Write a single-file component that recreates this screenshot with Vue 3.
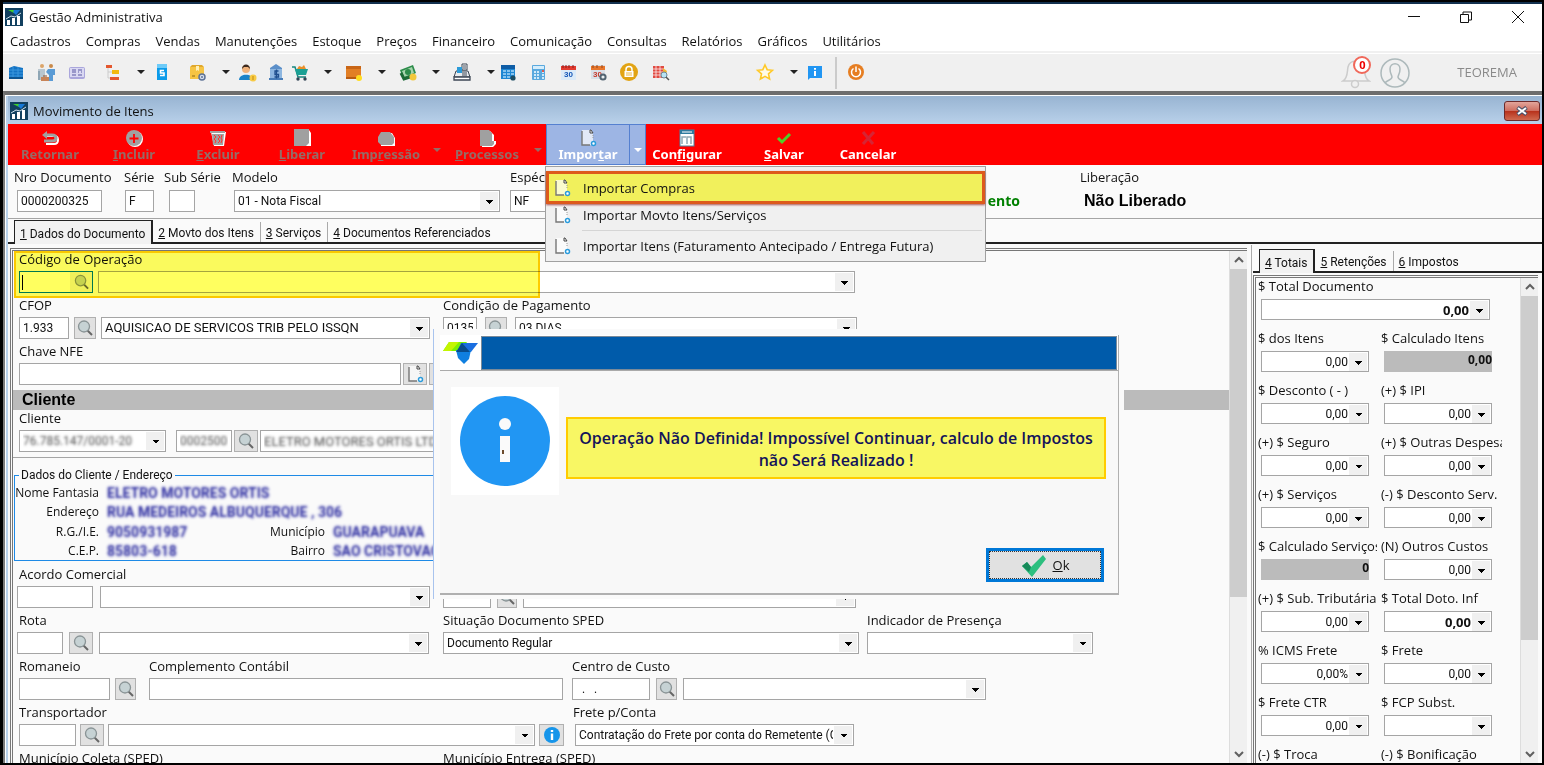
<script setup>
const menus = ['Cadastros', 'Compras', 'Vendas', 'Manutenções', 'Estoque', 'Preços', 'Financeiro', 'Comunicação', 'Consultas', 'Relatórios', 'Gráficos', 'Utilitários']

const tools = [
  { icon: 'building', gap: 3 }, { icon: 'people', gap: 11 }, { icon: 'card', gap: 10 },
  { icon: 'tree', gap: 16 }, { icon: 'caret', gap: 13 }, { icon: 'book', gap: 6 },
  { icon: 'box', gap: 15 }, { icon: 'caret', gap: 14 }, { icon: 'seller', gap: 7 },
  { icon: 'bank', gap: 8 }, { icon: 'cart', gap: 4 }, { icon: 'caret', gap: 13 },
  { icon: 'package', gap: 11 }, { icon: 'caret', gap: 13 }, { icon: 'money', gap: 11 },
  { icon: 'caret', gap: 13 }, { icon: 'register', gap: 11 }, { icon: 'caret', gap: 14 },
  { icon: 'schedule', gap: 2 }, { icon: 'calc', gap: 10 }, { icon: 'cal', gap: 10 },
  { icon: 'calgear', gap: 11 }, { icon: 'lock', gap: 10 }, { icon: 'report', gap: 11 },
  { icon: 'star', gap: 85 }, { icon: 'caret', gap: 14 }, { icon: 'info', gap: 6 },
  { icon: 'sep', gap: 10 }, { icon: 'power', gap: 9 },
]

const actions = [
  { a: '', k: 'R', b: 'etornar', plain: true, icon: 'a-back', off: true },
  { a: '', k: 'I', b: 'ncluir', icon: 'a-plus', off: true },
  { a: '', k: 'E', b: 'xcluir', icon: 'a-trash', off: true },
  { a: '', k: 'L', b: 'iberar', icon: 'a-page', off: true },
  { a: 'Imp', k: 'r', b: 'essão', icon: 'a-print', off: true, drop: true },
  { a: '', k: 'P', b: 'rocessos', icon: 'a-doc', off: true, drop: true },
  { a: 'Impor', k: 't', b: 'ar', icon: 'import', drop: true, on: true },
  { a: 'Con', k: 'f', b: 'igurar', icon: 'a-config', narrow: true },
  { a: '', k: 'S', b: 'alvar', icon: 'a-check' },
  { a: 'Cancelar', k: '', b: '', icon: 'a-x' },
]

const tabs = [['1', 'Dados do Documento'], ['2', 'Movto dos Itens'], ['3', 'Serviços'], ['4', 'Documentos Referenciados']]
const sideTabs = [['4', 'Totais'], ['5', 'Retenções'], ['6', 'Impostos']]

const totals = [
  { label: '$ Total Documento', v: '0,00', wide: true, bold: true },
  { label: '$ dos Itens', v: '0,00' }, { label: '$ Calculado Itens', v: '0,00', calc: true },
  { label: '$ Desconto ( - )', v: '0,00' }, { label: '(+) $ IPI', v: '0,00' },
  { label: '(+) $ Seguro', v: '0,00' }, { label: '(+) $ Outras Despesas', v: '0,00' },
  { label: '(+) $ Serviços', v: '0,00' }, { label: '(-) $ Desconto Serv.', v: '0,00' },
  { label: '$ Calculado Serviços', v: '0', calc: true }, { label: '(N) Outros Custos', v: '0,00' },
  { label: '(+) $ Sub. Tributária', v: '0,00' }, { label: '$ Total Doto. Inf', v: '0,00', bold: true },
  { label: '% ICMS Frete', v: '0,00%' }, { label: '$ Frete', v: '0,00' },
  { label: '$ Frete CTR', v: '0,00' }, { label: '$ FCP Subst.', v: '' },
  { label: '(-) $ Troca', v: '0,00' }, { label: '(-) $ Bonificação', v: '0,00' },
]
</script>

<template>
  <svg class="sprite" aria-hidden="true">
    <symbol id="brand" viewBox="0 0 18 18"><rect width="18" height="18" fill="#12405f" /><path d="M3 2h6l3 2-3 1z" fill="#3fd02c" /><path d="M9 2h6l-4 5-3-3z" fill="#1478d8" /><path d="M2 12h3v5H2zM7 10h3v7H7zM12 8h3v9h-3z" fill="#fff" /><path d="M1 11l5-3 4 1 6-4" stroke="#cfe2ee" fill="none" /></symbol>
    <symbol id="building" viewBox="0 0 20 20"><path d="M3 5l5-2 9 2v10H3z" fill="#1373c4" /><path d="M3 7h14M3 10h14M3 13h14M7 4v11M12 4v11" stroke="#3a97dd" stroke-width="1" /><path d="M3 14h14v2H3z" fill="#0e5490" /></symbol>
    <symbol id="people" viewBox="0 0 20 20"><circle cx="5" cy="3" r="2" fill="#dca56a" /><circle cx="14" cy="3" r="2" fill="#c98a4a" /><path d="M1 6h7v11H1z" fill="#b9c6cf" /><path d="M1 8v9h2V8z" fill="#8fa6b5" /><path d="M11 6h7v6h-2v6h-4v-6l-3-3z" fill="#5a9bd5" /><path d="M4 14h8v4H4z" fill="#c88458" /><path d="M6 13h4" stroke="#8a5030" /></symbol>
    <symbol id="card" viewBox="0 0 20 20"><rect x="2" y="4" width="16" height="12" rx="2" fill="#aaa6dc" /><rect x="3" y="5" width="14" height="9" fill="#d9d8f2" /><path d="M5 7h4M5 9h4M5 12h4M11 7h4M11 9h1m2 0h1M11 12h4" stroke="#8481bd" stroke-width="1.4" /></symbol>
    <symbol id="tree" viewBox="0 0 20 20"><path d="M5 5v10h5M5 9h5" stroke="#ccc" fill="none" /><rect x="3" y="2" width="6" height="3" fill="#e4572e" /><rect x="9" y="7" width="7" height="4" fill="#f2b90f" /><rect x="7" y="14" width="9" height="3" fill="#e4572e" /></symbol>
    <symbol id="book" viewBox="0 0 20 20"><rect x="5" y="1" width="10" height="16" fill="#0c9bea" /><rect x="5" y="1" width="10" height="4" fill="#6ecbf8" /><path d="M12 7.500H8.500V10H12v2.500H8" stroke="#fff" stroke-width="1.600" fill="none" /></symbol>
    <symbol id="box" viewBox="0 0 20 20"><path d="M3 4h14v12H3z" fill="#f6c443" /><path d="M3 4l2-2h10l2 2z" fill="#e0a82c" /><path d="M9 3h3v5l-1.500-1L9 8z" fill="#fff0b8" /><path d="M5 13h3" stroke="#8c6a16" /><circle cx="15" cy="14" r="3" fill="#d6deea" stroke="#5e7397" stroke-width="1.500" /><circle cx="15" cy="14" r="1" fill="#5e7397" /></symbol>
    <symbol id="seller" viewBox="0 0 20 20"><circle cx="8" cy="6" r="4" fill="#f0b27a" /><path d="M4 6c0-6 8-6 8 0l-2-2H6z" fill="#3c2a20" /><path d="M1 17c0-7 14-7 14 0z" fill="#1b83c9" /><circle cx="15" cy="15" r="3.500" fill="#f7ca45" /><path d="M15 13v4" stroke="#c28a10" /></symbol>
    <symbol id="bank" viewBox="0 0 20 20"><path d="M4 5l6-4 6 4v2H4z" fill="#5b8fc9" /><rect x="4" y="6" width="12" height="10" fill="#8db6e0" /><path d="M3 15h14v2H3z" fill="#477cb8" /><path d="M12.500 8H9v3.500h3.500V14H8.500M10.500 6.500v9" stroke="#1f4f8e" stroke-width="1.300" fill="none" /></symbol>
    <symbol id="cart" viewBox="0 0 20 20"><path d="M2 4h3l3 10h8" stroke="#17877f" stroke-width="1.500" fill="none" /><path d="M5 6h13l-2 6H7z" fill="#1aa094" /><path d="M7 6l2-3 3 1 2-2 2 4z" fill="#e98f29" /><circle cx="8" cy="16" r="1.700" fill="#345" /><circle cx="15" cy="16" r="1.700" fill="#345" /></symbol>
    <symbol id="package" viewBox="0 0 20 20"><path d="M2 3h15v13H2z" fill="#e27f25" /><path d="M2 3h15v3H2z" fill="#c96616" /><path d="M2 14h13v2H2z" fill="#b85c12" /><circle cx="15" cy="15" r="3" fill="#ffdd1f" /></symbol>
    <symbol id="money" viewBox="0 0 20 20"><path d="M2 7l13-5 3 8-13 6z" fill="#2c8c4a" /><path d="M4 8l10-4 2 6-10 4z" fill="#a5d3ac" /><circle cx="10" cy="9" r="3" fill="#2c8c4a" /><path d="M3 10l3 6 6-2" stroke="#1c6a36" stroke-width="3" fill="none" /><circle cx="15" cy="14" r="3.500" fill="#f2c83b" /></symbol>
    <symbol id="register" viewBox="0 0 20 20"><path d="M10 1h5v6h-5z" fill="#fff" stroke="#3d4654" /><path d="M4 8h12l2 6H2z" fill="#e8ebee" stroke="#3d4654" /><path d="M2 14h16v3H2z" fill="#fff" stroke="#3d4654" stroke-width="1.300" /><path d="M10 10h5M10 12h5M11 3h3M11 5h3" stroke="#3d4654" /><path d="M5 4h5v6H5z" fill="#2c9bd8" /></symbol>
    <symbol id="schedule" viewBox="0 0 20 20"><rect x="3" y="2" width="14" height="14" fill="#1f87d3" /><rect x="3" y="2" width="14" height="4" fill="#0f5da6" /><path d="M5 8h3m1 0h3m1 0h3M5 11h3m1 0h3m1 0h3M5 14h3m1 0h3" stroke="#a9d8f8" stroke-width="1.700" /><circle cx="15" cy="15" r="2.600" fill="#1c4d63" /></symbol>
    <symbol id="calc" viewBox="0 0 20 20"><rect x="4" y="2" width="13" height="15" rx="1" fill="#5aa9de" /><rect x="5" y="3" width="11" height="3" fill="#d5edfb" /><path d="M6 9h2m1 0h2m3 0h2M6 12h2m1 0h2m3 0h2M6 15h2m1 0h2m3 0h2" stroke="#cfe9f9" stroke-width="1.800" /><path d="M14 8h2" stroke="#e2574c" stroke-width="2" /></symbol>
    <symbol id="cal" viewBox="0 0 20 20"><rect x="3" y="2" width="15" height="15" fill="#dcebf8" /><rect x="3" y="3" width="15" height="4" fill="#e23b31" /><path d="M5 2v3m3-3v3m3-3v3m4-3v3" stroke="#8c1f18" /><text x="6" y="14" font-family="Liberation Sans" font-size="8" font-weight="bold" fill="#1557b8">30</text></symbol>
    <symbol id="calgear" viewBox="0 0 20 20"><rect x="2" y="2" width="14" height="14" fill="#d9e0e8" /><rect x="2" y="3" width="14" height="4" fill="#e8772c" /><path d="M4 2v3m4-3v3m5-3v3" stroke="#95491a" /><text x="4" y="14" font-family="Liberation Sans" font-size="8" font-weight="bold" fill="#c63a2c">30</text><circle cx="14" cy="14" r="2.600" fill="#e8edf0" stroke="#526370" stroke-width="2" /></symbol>
    <symbol id="lock" viewBox="0 0 20 20"><circle cx="10" cy="9" r="9" fill="#e2a414" /><path d="M7 8V6.500c0-4 6-4 6 0V8" stroke="#fff" stroke-width="1.500" fill="none" /><rect x="5.500" y="8" width="9" height="6" fill="#fff" /><path d="M7 10h6M7 12h6" stroke="#e2a414" stroke-width=".8" /></symbol>
    <symbol id="report" viewBox="0 0 20 20"><rect x="3" y="3" width="11" height="12" fill="#e04a42" /><path d="M3 6h11M3 9h11M3 12h11M6 3v12M10 3v12" stroke="#fff" stroke-width=".7" /><path d="M13 5l4 3-1 3-3-2z" fill="#f2b632" /><circle cx="14" cy="12" r="3" fill="#b7e2f5" stroke="#6d8794" /><path d="M16 14l3 3" stroke="#555" stroke-width="1.500" /></symbol>
    <symbol id="star" viewBox="0 0 20 20"><path d="M10 2l2.200 4.700 5.200.6-3.900 3.500 1.100 5.200L10 13.400 5.400 16l1.100-5.200-3.900-3.500 5.200-.6z" fill="#fffbe8" stroke="#ffc928" stroke-width="1.600" /></symbol>
    <symbol id="info" viewBox="0 0 20 20"><path d="M3 3h14v12H5l-2 2z" fill="#2196f3" /><path d="M10 5v1.800M10 8v5" stroke="#fff" stroke-width="2" /></symbol>
    <symbol id="power" viewBox="0 0 20 20"><circle cx="10" cy="9" r="8" fill="#e67e22" /><path d="M7.500 5.500a4.500 4.500 0 1 0 5 0M10 3.500V9" stroke="#fff" stroke-width="1.500" fill="none" /></symbol>
    <symbol id="sep" viewBox="0 0 2 32"><path d="M1 0v32" stroke="#a6a6a6" stroke-width="1" /></symbol>
    <symbol id="caret" viewBox="0 0 10 20"><path d="M1 7h8l-4 4z" fill="#222" /></symbol>
    <symbol id="caretw" viewBox="0 0 10 20"><path d="M1 8h8l-4 4z" fill="currentColor" /></symbol>
    <symbol id="import" viewBox="0 0 18 18"><path d="M3 1h8l3 4v11H3z" fill="#fff" opacity=".7" /><path d="M3 2v14h8" stroke="#777" stroke-width="1.400" fill="none" /><path d="M11 1h1l2 3h-3z" fill="#fff" stroke="#444" stroke-width="1" /><path d="M14 6v4" stroke="#999" stroke-dasharray="1 1" /><circle cx="14.500" cy="14.500" r="2" fill="#fff" stroke="#2a9bdc" stroke-width="1.500" /></symbol>
    <symbol id="a-back" viewBox="0 0 18 18"><path d="M6 7h7q4 0 4 4t-4 4H5" stroke="#fff" stroke-width="2" fill="none" /><path d="M5 6h6q4 0 4 3t-4 3H3" stroke="#a0a0a0" stroke-width="3" fill="none" /><path d="M1 6l5-4v8z" fill="#a0a0a0" /></symbol>
    <symbol id="a-plus" viewBox="0 0 18 18"><circle cx="10" cy="10" r="8" fill="#fff" /><circle cx="9" cy="9" r="8" fill="#a0a0a0" /><path d="M9 5v9M4.500 9.500h9" stroke="#f00" stroke-width="1.800" /></symbol>
    <symbol id="a-trash" viewBox="0 0 18 18"><path d="M2 3h15l-2 14H5z" fill="#fff" /><path d="M1 2h15v2H1zM3 5h12l-1 11H4z" fill="#a0a0a0" /><path d="M5 6l2 2-2 2 2 2-1 2M9 6l2 2-2 2 2 2-2 2M13 6l-1 3 1 2-1 3" stroke="#f33" stroke-width="1" fill="none" /></symbol>
    <symbol id="a-page" viewBox="0 0 18 18"><path d="M2 1h14l2 3v13H6z" fill="#fff" /><path d="M1 0h15v14l-3 3H1z" fill="#a0a0a0" /></symbol>
    <symbol id="a-print" viewBox="0 0 18 18"><path d="M4 4h11l3 5v8H4z" fill="#fff" /><path d="M4 3h9l4 5v6l-2 2H4l-3-3V8z" fill="#a0a0a0" /></symbol>
    <symbol id="a-doc" viewBox="0 0 18 18"><path d="M4 2h8l4 4v6h2v3l-3 3H4z" fill="#fff" /><path d="M2 1h9l3 3v8h2v3l-2 2H2z" fill="#a0a0a0" /></symbol>
    <symbol id="a-config" viewBox="0 0 18 18"><rect x="2" y="1" width="14" height="16" fill="#fff" stroke="#4b86a3" /><path d="M2 1h14v4H2z" fill="#2f7b9f" /><path d="M4 3h10" stroke="#fff" /><path d="M4 15V8h4M9 15V8h4v7" fill="none" stroke="#8fa8b4" stroke-width="1.500" /></symbol>
    <symbol id="a-check" viewBox="0 0 18 18"><path d="M3 9l4 4 8-8" stroke="#4fcf28" stroke-width="3" fill="none" /></symbol>
    <symbol id="a-x" viewBox="0 0 18 18"><path d="M4 3l10 12M15 3L4 15" stroke="#d62434" stroke-width="3" fill="none" /></symbol>
    <symbol id="search" viewBox="0 0 18 18"><path d="M11 11l5 5" stroke="#666" stroke-width="2" /><circle cx="8" cy="7.500" r="5.500" fill="#c6d2d4" stroke="#8a9496" stroke-width="1.300" /></symbol>
    <symbol id="infodot" viewBox="0 0 18 18"><circle cx="9" cy="9" r="8" fill="#1695ea" /><path d="M9 4v2M9 7.500V14" stroke="#fff" stroke-width="2.400" /></symbol>
    <symbol id="up" viewBox="0 0 10 10"><path d="M1 7l4-4 4 4" stroke="#606060" stroke-width="2" fill="none" /></symbol>
    <symbol id="down" viewBox="0 0 10 10"><path d="M1 3l4 4 4-4" stroke="#606060" stroke-width="2" fill="none" /></symbol>
  </svg>

  <div class="screen">
    <header class="titlebar">
      <svg class="i18"><use href="#brand" /></svg>
      <span class="grow">Gestão Administrativa</span>
      <button class="win" aria-label="Minimizar"><svg viewBox="0 0 12 12"><path d="M0 5.500h12" stroke="#111" /></svg></button>
      <button class="win" aria-label="Restaurar"><svg viewBox="0 0 12 12"><path d="M.5 3.500h8v8h-8zM3 3V1h8.500v8H9" stroke="#111" fill="none" /></svg></button>
      <button class="win" aria-label="Fechar"><svg viewBox="0 0 12 12"><path d="M0 0l12 12M12 0L0 12" stroke="#111" /></svg></button>
    </header>
    <nav class="menubar"><a v-for="m in menus" :key="m" href="#">{{ m }}</a></nav>

    <div class="tools">
      <button v-for="(t, n) in tools" :key="n" :class="['tool', t.icon]" :style="{ marginLeft: t.gap + 'px' }" :aria-label="t.icon">
        <svg><use :href="'#' + t.icon" /></svg>
      </button>
      <span class="grow"></span>
      <span class="bell">
        <svg viewBox="0 0 30 34"><path d="M2 25c5-3 4-9 5-14 1-4 4-6 8-6s7 2 8 6c1 5 0 11 5 14z" fill="#f2f2f2" stroke="#ccc" stroke-width="1.500" /><circle cx="14" cy="28" r="3.500" fill="#f0f0f0" stroke="#ccc" stroke-width="1.500" /></svg>
        <b>0</b>
      </span>
      <svg class="user" viewBox="0 0 30 30"><circle cx="15" cy="15" r="14" fill="none" stroke="#adb9bb" stroke-width="1.500" /><path d="M5 25c2-3 7-3 7-6 0-2-2-3-2-8 0-7 10-7 10 0 0 5-2 6-2 8 0 3 5 3 7 6" fill="none" stroke="#adb9bb" stroke-width="1.500" /></svg>
      <span class="company">TEOREMA</span>
    </div>

    <main class="child">
      <div class="childtitle">
        <svg class="i18"><use href="#brand" /></svg>
        <span class="grow">Movimento de Itens</span>
        <button class="close" aria-label="Fechar janela"><svg viewBox="0 0 12 10"><path d="M1.500 1.500l9 7M10.500 1.500l-9 7" stroke="#4a5068" stroke-width="4" /><path d="M2 2l8 6M10 2L2 8" stroke="#fff" stroke-width="2" /></svg></button>
      </div>

      <div class="actions">
        <template v-for="a in actions" :key="a.icon">
          <button :class="['act', { off: a.off, on: a.on, narrow: a.narrow }]">
            <svg class="i18"><use :href="'#' + a.icon" /></svg>
            <span>{{ a.a }}<u :class="{ plain: a.plain }">{{ a.k }}</u>{{ a.b }}</span>
          </button>
          <button v-if="a.drop" :class="['drop', { off: a.off, on: a.on }]" aria-label="Mais opções"><svg><use href="#caretw" /></svg></button>
        </template>
        <div class="popup">
          <button class="item hot"><svg class="i18"><use href="#import" /></svg>Importar Compras</button>
          <button class="item"><svg class="i18"><use href="#import" /></svg>Importar Movto Itens/Serviços</button>
          <hr>
          <button class="item"><svg class="i18"><use href="#import" /></svg>Importar Itens (Faturamento Antecipado / Entrega Futura)</button>
        </div>
      </div>

      <section class="head">
        <div class="hf nro"><label for="nro">Nro Documento</label><input id="nro" value="0000200325"></div>
        <div class="hf serie"><label for="serie">Série</label><input id="serie" value="F"></div>
        <div class="hf sub"><label for="sub">Sub Série</label><input id="sub"></div>
        <div class="hf modelo"><label for="modelo">Modelo</label><select id="modelo"><option>01 - Nota Fiscal</option></select></div>
        <div class="hf especie"><label for="esp">Espécie</label><input id="esp" value="NF"></div>
        <div class="status">ento</div>
        <div class="hf lib"><span>Liberação</span><strong>Não Liberado</strong></div>
      </section>

      <div class="tabs">
        <button v-for="(t, n) in tabs" :key="n" :class="{ active: n === 0 }"><u>{{ t[0] }}</u> {{ t[1] }}</button>
      </div>

      <div class="work">
        <div class="pane">
          <form class="form" @submit.prevent>
            <div class="mark"></div>
            <div class="row">
              <div class="fld g-op"><label for="op">Código de Operação</label>
                <div><span class="combo"><input id="op"><button aria-label="Pesquisar operação"><svg class="i18"><use href="#search" /></svg></button></span><select aria-label="Operação"><option></option></select></div>
              </div>
            </div>
            <div class="row">
              <div class="fld g-cfop"><label for="cfop">CFOP</label>
                <div><input id="cfop" value="1.933"><button aria-label="Pesquisar CFOP"><svg class="i18"><use href="#search" /></svg></button><select class="caps" aria-label="Descrição CFOP"><option>AQUISICAO DE SERVICOS TRIB PELO ISSQN</option></select></div>
              </div>
              <div class="fld g-cond"><label for="cond">Condição de Pagamento</label>
                <div><input id="cond" value="0135"><button aria-label="Pesquisar condição"><svg class="i18"><use href="#search" /></svg></button><select aria-label="Condição"><option>03 DIAS</option></select></div>
              </div>
            </div>
            <div class="row">
              <div class="fld g-nfe"><label for="nfe">Chave NFE</label>
                <div><input id="nfe"><button aria-label="Importar chave"><svg class="i18"><use href="#import" /></svg></button><button aria-label="Consultar chave"></button></div>
              </div>
            </div>
            <h2>Cliente</h2>
            <div class="row client">
              <div class="fld g-cli"><label for="cli">Cliente</label>
                <div><select id="cli" class="masked"><option>76.785.147/0001-20</option></select><input class="masked" aria-label="Código do cliente" value="0002500"><button aria-label="Pesquisar cliente"><svg class="i18"><use href="#search" /></svg></button><input class="masked caps" aria-label="Nome do cliente" value="ELETRO MOTORES ORTIS LTDA"></div>
              </div>
            </div>
            <fieldset>
              <legend>Dados do Cliente / Endereço</legend>
              <dl>
                <dt>Nome Fantasia</dt><dd class="span">ELETRO MOTORES ORTIS</dd>
                <dt>Endereço</dt><dd class="span">RUA MEDEIROS ALBUQUERQUE , 306</dd>
                <dt>R.G./I.E.</dt><dd>9050931987</dd><dt>Município</dt><dd>GUARAPUAVA</dd>
                <dt>C.E.P.</dt><dd>85803-618</dd><dt>Bairro</dt><dd>SAO CRISTOVAO</dd>
              </dl>
            </fieldset>
            <div class="row">
              <div class="fld g-aco"><label for="aco">Acordo Comercial</label>
                <div><input id="aco"><select aria-label="Acordo"><option></option></select></div>
              </div>
              <div class="fld g-aco2"><label></label>
                <div><input aria-label="Código"><button aria-label="Pesquisar"><svg class="i18"><use href="#search" /></svg></button><select aria-label="Descrição"><option></option></select></div>
              </div>
            </div>
            <div class="row">
              <div class="fld g-rota"><label for="rota">Rota</label>
                <div><input id="rota"><button aria-label="Pesquisar rota"><svg class="i18"><use href="#search" /></svg></button><select aria-label="Nome da rota"><option></option></select></div>
              </div>
              <div class="fld g-sped"><label for="sped">Situação Documento SPED</label>
                <div><select id="sped"><option>Documento Regular</option></select></div>
              </div>
              <div class="fld g-pres"><label for="pres">Indicador de Presença</label>
                <div><select id="pres"><option></option></select></div>
              </div>
            </div>
            <div class="row">
              <div class="fld g-rom"><label for="rom">Romaneio</label>
                <div><input id="rom"><button aria-label="Pesquisar romaneio"><svg class="i18"><use href="#search" /></svg></button></div>
              </div>
              <div class="fld g-comp"><label for="comp">Complemento Contábil</label>
                <div><input id="comp"></div>
              </div>
              <div class="fld g-cc"><label for="cc">Centro de Custo</label>
                <div><input id="cc" value="  .   ."><button aria-label="Pesquisar centro de custo"><svg class="i18"><use href="#search" /></svg></button><select aria-label="Nome do centro de custo"><option></option></select></div>
              </div>
            </div>
            <div class="row">
              <div class="fld g-tra"><label for="tra">Transportador</label>
                <div><input id="tra"><button aria-label="Pesquisar transportador"><svg class="i18"><use href="#search" /></svg></button><select aria-label="Nome do transportador"><option></option></select><button aria-label="Informações"><svg class="i18"><use href="#infodot" /></svg></button></div>
              </div>
              <div class="fld g-fre"><label for="fre">Frete p/Conta</label>
                <div><select id="fre"><option>Contratação do Frete por conta do Remetente (CIF)</option></select></div>
              </div>
            </div>
            <div class="row">
              <div class="fld g-aco"><label for="mc">Município Coleta (SPED)</label>
                <div><input id="mc"><select aria-label="Município de coleta"><option></option></select></div>
              </div>
              <div class="fld g-sped"><label for="me">Município Entrega (SPED)</label>
                <div><select id="me"><option></option></select></div>
              </div>
            </div>
          </form>
          <div class="scroll"><svg><use href="#up" /></svg><i class="long"></i><svg><use href="#down" /></svg></div>
        </div>

        <aside class="side">
          <div class="tabs">
            <button v-for="(t, n) in sideTabs" :key="n" :class="{ active: n === 0 }"><u>{{ t[0] }}</u> {{ t[1] }}</button>
          </div>
          <div class="pane">
            <div class="totals">
              <div v-for="(t, n) in totals" :key="n" :class="['tot', { wide: t.wide, bold: t.bold }]">
                <label :for="'t' + n">{{ t.label }}</label>
                <output v-if="t.calc" :id="'t' + n">{{ t.v }}</output>
                <select v-else :id="'t' + n"><option>{{ t.v }}</option></select>
              </div>
            </div>
            <div class="scroll"><svg><use href="#up" /></svg><i></i><svg><use href="#down" /></svg></div>
          </div>
        </aside>
      </div>
    </main>

    <div class="dialog" role="alertdialog" aria-labelledby="msg">
      <div class="frame">
        <div class="dhead">
          <svg viewBox="0 0 40 34"><path d="M9 7h18l-6 9H3z" fill="#7cf000" /><path d="M9 7h10l-8 9H3z" fill="#c4f500" /><path d="M21 8h17l-7 9H17z" fill="#1a6ee0" /><path d="M16 15h15l-2 9-5 5-6-6z" fill="#0f7fe0" /><path d="M22 8l8 9H16z" fill="#084c8c" /></svg>
          <span></span>
        </div>
        <div class="dbody">
          <svg class="big" viewBox="0 0 108 108"><rect width="108" height="108" fill="#fff" /><circle cx="54" cy="54" r="45" fill="#2196f3" /><circle cx="54" cy="37" r="6" fill="#fafafa" /><rect x="49" y="49" width="10" height="26" fill="#fafafa" /><rect x="51" y="63" width="2" height="4" fill="#6b4a2c" /></svg>
          <p id="msg">Operação Não Definida! Impossível Continuar, calculo de Impostos não Será Realizado !</p>
        </div>
        <button class="ok"><svg viewBox="0 0 26 26"><path d="M1 14l5-4 4 5L22 3l3 4-14 18z" fill="#2dbf7f" /><path d="M1 14l5-4 4 5-2 5z" fill="#168a5a" /></svg><span><u>O</u>k</span></button>
      </div>
    </div>
  </div>
</template>

<style>
body { background: #000; overflow: hidden; }
</style>

<style scoped>
* { box-sizing: border-box; }
.sprite { position: absolute; width: 0; height: 0; }
.screen { position: relative; height: 100vh; display: flex; flex-direction: column; overflow: hidden; padding: 2px 2px 2px 3px; background: #000; color: #111; font: 13px/18px "Open Sans", "Noto Sans", sans-serif; }
button, input, select { font: inherit; color: inherit; margin: 0; padding: 0; border-radius: 0; }
button { border: 0; background: none; display: flex; align-items: center; justify-content: center; }
a { color: inherit; text-decoration: none; }
.grow { flex: 1; }
.i18 { width: 18px; height: 18px; flex: none; }
.titlebar { flex: none; height: 28px; display: flex; align-items: center; gap: 6px; padding: 0 18px 0 2px; background: #fff; border-top: 2px solid #12304e; }
.win { width: 12px; height: 24px; margin-left: 34px; }
.win svg { width: 12px; height: 12px; }
.menubar { flex: none; height: 23px; display: flex; align-items: center; gap: 15px; padding: 0 7px; background: #fff; border-bottom: 2px solid #f0f0f0; }
.tools { flex: none; height: 38px; display: flex; align-items: center; background: #f0f0f0; border-top: 1px solid #fff; }
.tool { width: 20px; flex: none; height: 32px; }
.tool svg { width: 20px; height: 20px; }
.tool.caret, .tool.caret svg { width: 10px; }
.tool.sep, .tool.sep svg { width: 2px; height: 32px; }
.bell { position: relative; width: 30px; height: 34px; }
.bell svg { width: 30px; height: 34px; }
.bell b { position: absolute; left: 12px; top: 0; width: 18px; height: 18px; border: 2px solid #f0685a; border-radius: 9px; background: #fff; color: #e00; font-size: 11px; line-height: 14px; text-align: center; }
.user { width: 30px; height: 30px; margin: 0 47px 0 9px; }
.company { color: #8a8a8a; padding: 0 25px 2px 0; line-height: 16px; }

.child { flex: 1; min-height: 0; display: flex; flex-direction: column; border: 1px solid #7a7a7a; border-top: 4px solid #6e6e6e; border-right: 0; border-left-width: 2px; border-bottom: 0; padding-left: 3px; background: #b9d1ea; box-shadow: inset 1px 1px #fff; }
.childtitle { flex: none; height: 29px; display: flex; align-items: center; gap: 5px; padding: 2px 2px 0 2px; background: linear-gradient(#98b4d2, #b9d1ea); border-top: 1px solid #fff; }
.close { width: 36px; height: 20px; border: 1px solid #6d2a2a; border-radius: 3px; background: linear-gradient(#e2a59b, #cf6f60 48%, #b8321c 52%, #cf6a50); }
.close svg { width: 12px; height: 10px; }

.actions { position: relative; flex: none; height: 41px; display: flex; background: #f00; color: #fff; font: bold 13px/16px "Noto Sans", sans-serif; }
.act { width: 84px; flex-direction: column; justify-content: flex-start; padding-top: 5px; }
.act span { line-height: 14px; }
.act.narrow { width: 82px; margin-right: 14px; }
.drop { width: 17px; padding-top: 10px; }
.drop svg { width: 10px; height: 20px; }
.off { color: #966b66; }
.on { background: #9db5e4; border: 1px solid #5580d0; padding-top: 4px; }
.drop.on { margin-left: -1px; padding-top: 10px; }
u.plain { text-decoration: none; }
.popup { position: absolute; z-index: 2; left: 537px; top: 42px; width: 441px; padding: 4px 0; background: #f0f0f0; border: 1px solid #a0a0a0; font: 13px/18px "Open Sans", sans-serif; color: #111; }
.item { width: 100%; height: 22px; justify-content: flex-start; gap: 12px; padding-left: 7px; }
.item.hot { height: 33px; background: #f1f05c; border: 3px solid #dd5a1c; padding-left: 4px; box-shadow: 0 1px 2px #a55; }
.popup hr { margin: 4px 3px 4px 36px; border: 0; border-top: 1px solid #d5d5d5; }

input, select, output { height: 22px; border: 1px solid #a5a5a5; background: #fff; font: 12px/18px Roboto, sans-serif; outline: 0; min-width: 0; }
input { padding: 0 3px; }
select {
  appearance: none; padding: 0 20px 0 3px; overflow: hidden;
  background: linear-gradient(45deg, transparent 50%, #000 50%) right 9px top 9px / 4px 4px no-repeat,
    linear-gradient(135deg, #000 50%, transparent 50%) right 5px top 9px / 4px 4px no-repeat,
    linear-gradient(#f0f0f0, #f0f0f0) right 1px top 1px / 18px 18px no-repeat, #fff;
}
.caps { font-size: 13px; }
.head { flex: none; height: 54px; position: relative; display: flex; gap: 10px; padding: 3px 6px 0; background: #fafafa; border-bottom: 1px solid #a5a5a5; }
.hf { display: flex; flex-direction: column; gap: 4px; align-items: flex-start; white-space: nowrap; }
.hf input { margin-left: 3px; }
.nro { width: 100px; } .nro input { width: 85px; }
.serie { width: 30px; } .serie input { width: 29px; margin-left: 1px; }
.sub { width: 58px; } .sub input { width: 26px; margin-left: 5px; }
.modelo { width: 268px; } .modelo select { width: 266px; margin-left: 2px; }
.especie { width: 60px; } .especie input { width: 60px; margin-left: 0; }
.status { width: 440px; text-align: right; align-self: flex-end; margin-bottom: 8px; color: #008000; font-weight: bold; font-size: 14px; }
.lib { margin-left: 50px; gap: 6px; }
.lib strong { padding-left: 4px; font: bold 16px/18px "Liberation Sans", sans-serif; color: #000; }

.tabs { flex: none; height: 25px; display: flex; align-items: flex-end; padding-left: 6px; background: #fafafa; border-bottom: 2px solid #222; }
.tabs button { height: 20px; padding: 2px 6px 0 5px; font: 12px/18px Roboto, sans-serif; white-space: pre; border-right: 1px solid #aaa; }
.tabs button:last-child { border: 0; }
.tabs .active { height: 24px; margin-bottom: -2px; background: #f2f2f2; border: solid #222; border-width: 1px 2px 0 1px; }

.work { flex: 1; min-height: 0; display: flex; background: #fafafa; padding-top: 4px; gap: 4px; }
.pane { flex: 1; min-width: 0; min-height: 0; display: flex; border: 3px double #777; border-right: 0; border-bottom: 0; background: #fafafa; }
.work > .pane { margin-left: 2px; }
.form { position: relative; flex: 1; min-width: 0; overflow: hidden; }
.mark { position: absolute; z-index: 1; left: 1px; top: 0; width: 526px; height: 47px; border: 2px solid #fc0; background: #ffff5f; mix-blend-mode: multiply; pointer-events: none; }
.row { display: flex; height: 46px; padding-left: 6px; }
.fld { flex: none; white-space: nowrap; }
.fld > label { display: block; height: 20px; line-height: 16px; }
.fld > div { display: grid; grid-template-rows: 22px; }
.fld button { background: #e1e1e1; border: 1px solid #b0b0b0; }
.g-op > div { grid-template-columns: 74px 757px; column-gap: 5px; }
.combo { display: flex; align-items: center; border: 1px solid #0078d7; background: #fff; }
.combo::before { content: ""; width: 1px; height: 15px; margin-left: 2px; background: #000; }
.combo input { width: 47px; border: 0; height: 20px; }
.combo .i18 { width: 17px; }
.fld .combo button { flex: 1; height: 20px; border: 0; background: #f0f0f0; }
.g-cfop > div { grid-template-columns: 50px 22px 329px; column-gap: 5px; }
.g-cond { margin-left: 13px; }
.g-cond > div { grid-template-columns: 34px 22px 342px; column-gap: 8px; }
.g-nfe > div { grid-template-columns: 382px 24px 24px; column-gap: 2px; }
.form h2 { margin: 1px 0 0; height: 20px; padding-left: 9px; background: #bbb; font: bold 16px/20px "Liberation Sans", sans-serif; color: #000; }
.client { height: 48px; margin-right: 140px; border-bottom: 1px solid #a5a5a5; }
.g-cli > div { grid-template-columns: 155px 56px 24px 240px; column-gap: 2px; }
.g-cli select { width: 147px; }
.masked { color: transparent; text-shadow: 0 0 3px #444; }
fieldset { margin: 8px 140px 5px 1px; padding: 0 0 3px; height: 95px; border: 1px solid #1e8ae6; min-width: 0; }
legend { margin-left: 4px; padding: 0 2px; font: 12px/18px Roboto, sans-serif; }
dl { margin: 0; display: grid; grid-template-columns: 84px 128px 82px 1fr; grid-template-rows: 18px 20px 20px 17px; column-gap: 8px; font-size: 12px; align-items: center; }
dt { text-align: right; white-space: nowrap; }
dd { margin: 0; white-space: nowrap; color: transparent; text-shadow: 0 0 3px #22229c; font: bold 14px/18px Roboto, sans-serif; }
.span { grid-column: 2 / -1; }
.g-aco > div { grid-template-columns: 76px 330px; column-gap: 7px; }
.g-aco, .g-rota { width: 411px; }
.g-aco > div, .g-rota > div { margin-left: -2px; }
.g-aco2, .g-sped { margin-left: 13px; }
.g-aco2 > div { grid-template-columns: 48px 20px 333px; column-gap: 6px; }
.g-rota > div { grid-template-columns: 46px 24px 330px; column-gap: 6px; }
.g-sped { width: 416px; }
.g-pres { margin-left: 8px; width: 226px; }
.g-rom > div { grid-template-columns: 91px 21px; column-gap: 5px; }
.g-comp { margin-left: 13px; width: 414px; }
.g-cc { margin-left: 9px; }
.g-cc > div { grid-template-columns: 78px 21px 303px; column-gap: 6px; }
.g-cc input { white-space: pre; }
.g-tra > div { grid-template-columns: 57px 24px 427px 25px; column-gap: 4px; }
.g-fre { margin-left: 9px; width: 281px; }
.g-fre > div { padding-left: 2px; }

.scroll { width: 18px; flex: none; display: flex; flex-direction: column; align-items: center; background: #f0f0f0; border-left: 1px solid #ddd; }
.scroll svg { width: 10px; height: 18px; flex: none; }
.scroll i { width: 100%; flex: 0 0 71%; background: #cdcdcd; margin-bottom: auto; }
.scroll .long { flex-basis: 64%; }

.side { width: 291px; flex: none; display: flex; flex-direction: column; border-left: 1px solid #aaa; padding: 0 4px 0 1px; margin-top: -3px; }
.side .tabs { height: 28px; margin-right: -4px; }
.side .pane { margin-top: 2px; }
.totals { flex: 1; min-width: 0; overflow: hidden; display: grid; grid-template-columns: 119px 121px; grid-auto-rows: 52px; column-gap: 4px; align-content: start; padding-left: 2px; }
.tot { overflow: hidden; white-space: nowrap; }
.tot label { display: block; height: 21px; line-height: 16px; }
.tot select, .tot output { display: block; width: 108px; height: 21px; margin-left: 3px; text-align-last: right; }
.tot select { padding-right: 20px; }
.tot.wide { grid-column: 1 / -1; }
.tot.wide select { width: 229px; }
.tot output { background: #bbb; border: 0; font: bold 12px/18px "Open Sans", sans-serif; text-align: right; }
.tot.bold select { font: bold 13px/18px "Open Sans", sans-serif; }

.dialog { position: absolute; z-index: 3; left: 433px; top: 329px; width: 691px; height: 270px; padding: 6px 5px 6px 6px; background: #fafafa; border-left: 1px solid #a9c4ee; }
.frame { height: 260px; background: #f8f8f8; border: solid #b0b0b0; border-width: 0 1px 2px 0; display: flex; flex-direction: column; }
.dhead { height: 36px; flex: none; display: flex; background: #fff; border-bottom: 1px solid #aaa; }
.dhead svg { width: 40px; height: 34px; }
.dhead span { flex: 1; height: 34px; margin: 1px 1px 0 1px; background: #005baa; border: 1px solid #7a8a99; }
.dbody { display: flex; align-items: center; gap: 7px; padding: 16px 12px 0 11px; }
.big { width: 108px; height: 108px; flex: none; }
#msg { flex: 1; margin: 14px 0 0; padding: 8px 6px 6px; border: 2px solid #fc0; background: #f8f764; color: #14145a; font: 600 16px/22px "Open Sans", sans-serif; text-align: center; }
.ok { margin: auto 14px 11px auto; width: 118px; height: 34px; gap: 6px; background: #e1e1e1; border: 3px solid #0078d7; outline: 1px dotted #333; outline-offset: -4px; }
.ok svg { width: 26px; height: 26px; }
</style>
